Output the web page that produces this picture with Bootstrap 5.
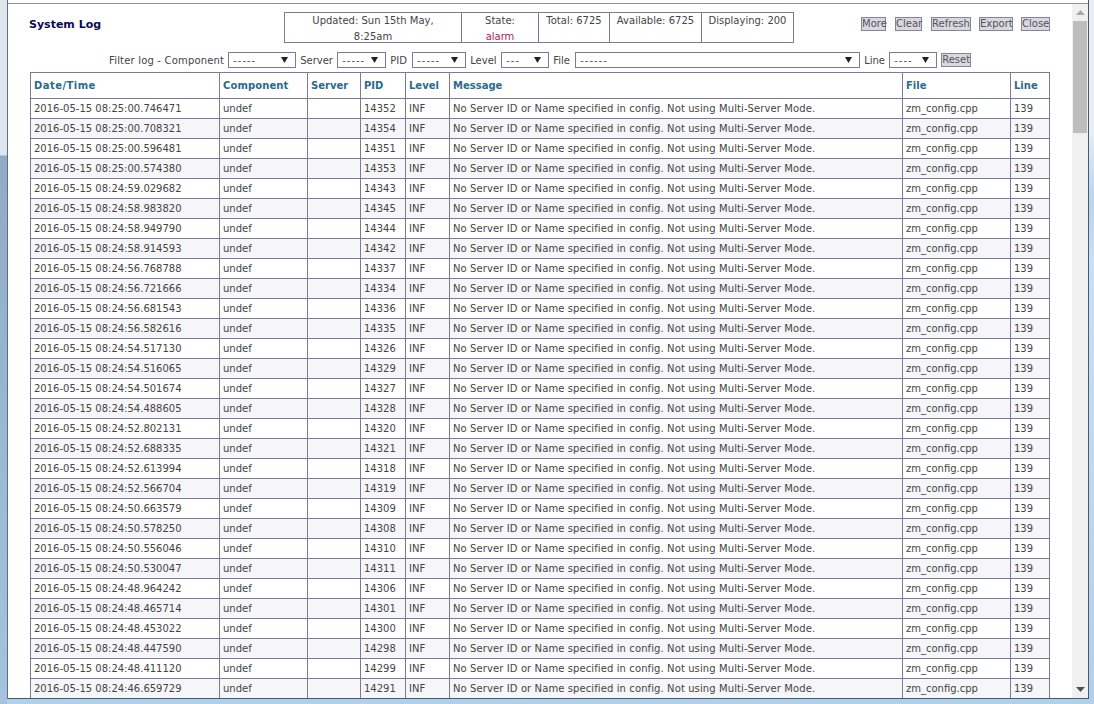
<!DOCTYPE html>
<html lang="en"><head><meta charset="utf-8"><title>System Log</title>
<link href="https://cdn.jsdelivr.net/npm/bootstrap@5.3.0/dist/css/bootstrap.min.css" rel="stylesheet">
<style>
html,body{height:100%;overflow:hidden;margin:0}
body{font-family:"DejaVu Sans",Verdana,sans-serif;font-size:10px;color:#444;background:#b9d1ea}
.winframe{height:704px;padding:0 5px 5px 7px;background:linear-gradient(to bottom,#dde6ee 0,#dde6ee 155px,#8fabc8 156px,#a5c3de 100%) left top/7px 100% no-repeat,linear-gradient(to bottom,#e8eef4 0,#e8eef4 130px,#b8d4f0 200px,#c8e0f8 260px,#b0d0ec 100%)}
.winbody{height:100%;border-left:1px solid #5f6f80;border-right:1px solid #4a5a6a;border-bottom:1px solid #4a5a6a;background:#fff}
.topstrip{height:4px;flex:none;background:#fff;border-bottom:1px solid #8f8fa0}
.mainrow{min-height:0}
.pane{min-width:0;overflow:hidden;padding:0 22px}
.head-row{height:46px;padding-top:8px}
.page-title{width:255px;font-size:11px;font-weight:700;color:#0b0b55;margin:0 0 0 -1px;padding:6px 0 0 0;flex:none}
.statbox{border:1px solid #7d7a99;height:31px;width:510px;flex:none}
.statbox>div{border-right:1px solid #7d7a99;text-align:center;line-height:16px}
.statbox>div:last-child{border-right:0}
.s1{width:177px}.s2{width:77px}.s3{width:71px}.s4{width:92px}.s5{flex:1}
.alarmtxt{color:#b02050}
.zbtn{font:10px/12px "DejaVu Sans",Verdana,sans-serif;color:#555;background:#d9d7df;border:1px solid #86839f;padding:0;height:14px;border-radius:0}
.btnset{margin-top:5px;margin-left:auto;gap:8px}
.b1{width:25px;margin-right:1px}.b2{width:27px;margin-right:1px}.b3{width:40px}.b4{width:34px}.b5{width:29px}.b6{width:30px}
.filter-row{height:20px;gap:4px;margin-left:79px;white-space:nowrap;margin-bottom:2px}
.lbl-first{letter-spacing:.18px}
.lbl-pid{width:18px}
.lbl-lvl{width:27px}
.lbl-file{width:18px}
.lbl-line{width:21px}
.lbl-srv{width:33px}
.filter-row select{appearance:none;-webkit-appearance:none;font:10px "DejaVu Sans",Verdana,sans-serif;letter-spacing:1px;color:#555;height:16px;border:1px solid #7d7a99;border-radius:0;padding:0 0 0 4px;background:#fff url("data:image/svg+xml,%3Csvg xmlns='http://www.w3.org/2000/svg' width='7' height='6'%3E%3Cpath d='M0 0h7L3.5 6z' fill='%23222'/%3E%3C/svg%3E") no-repeat right 7px center}
.w1{width:68px}.w2{width:49px}.w3{width:54px}.w4{width:48px}.w5{width:285px}.w6{width:48px}
table.logtbl{table-layout:fixed;width:1019px;margin:0;border-collapse:collapse;--bs-table-bg:transparent;font-size:10px;color:#444}
table.logtbl th,table.logtbl td{border:1px solid #7d7a99;padding:0 3px;height:20px;line-height:18px;white-space:nowrap;overflow:hidden;vertical-align:middle;color:#444}
table.logtbl th{height:26px;color:#2b6a8c;font-weight:700}
table.logtbl th.thwide{letter-spacing:.45px}
table.logtbl th.thcomp{letter-spacing:.1px}
table.logtbl td.msgcell{letter-spacing:.1px}
table.logtbl tbody tr:nth-child(even) td{background:#f6f6f8}
.c1{width:189px}.c2{width:88px}.c3{width:53px}.c4{width:45px}.c5{width:44px}.c6{width:453px}.c7{width:108px}.c8{width:39px}
.sbar{width:16px;flex:none;background:#f0f0f0}
.sbtn{height:17px;flex:none}
.sthumb{width:14px;height:112px;background:#bdbdbd;flex:none}
.sfill{flex:1}
</style></head>
<body>
<div class="winframe">
<div class="winbody d-flex flex-column">
<div class="topstrip"></div>
<div class="mainrow d-flex flex-grow-1">
<div class="pane flex-grow-1">
<div class="head-row d-flex align-items-start">
<h1 class="page-title">System Log</h1>
<div class="statbox d-flex">
<div class="s1">Updated: Sun 15th May,<br>8:25am</div>
<div class="s2">State:<br><span class="alarmtxt">alarm</span></div>
<div class="s3">Total: 6725</div>
<div class="s4">Available: 6725</div>
<div class="s5">Displaying: 200</div>
</div>
<div class="btnset d-flex">
<button class="zbtn b1">More</button><button class="zbtn b2">Clear</button><button class="zbtn b3">Refresh</button><button class="zbtn b4">Export</button><button class="zbtn b5">Close</button>
</div>
</div>
<div class="filter-row d-flex align-items-center">
<span class="lbl-first">Filter log - Component</span><select class="w1"><option>-----</option></select>
<span class="lbl-srv">Server</span><select class="w2"><option>-----</option></select>
<span class="lbl-pid">PID</span><select class="w3"><option>-----</option></select>
<span class="lbl-lvl">Level</span><select class="w4"><option>---</option></select>
<span class="lbl-file">File</span><select class="w5"><option>------</option></select>
<span class="lbl-line">Line</span><select class="w6"><option>----</option></select>
<button class="zbtn b6">Reset</button>
</div>
<table class="table logtbl">
<colgroup><col class="c1"><col class="c2"><col class="c3"><col class="c4"><col class="c5"><col class="c6"><col class="c7"><col class="c8"></colgroup>
<thead><tr><th class="thwide">Date/Time</th><th class="thcomp">Component</th><th>Server</th><th>PID</th><th>Level</th><th>Message</th><th>File</th><th>Line</th></tr></thead>
<tbody id="rows"></tbody>
</table>
</div>
<div class="sbar d-flex flex-column align-items-center">
<div class="sbtn d-flex align-items-center justify-content-center"><svg width="9" height="5"><path d="M0 5L4.500 0 9 5z" fill="#a8a8a8"/></svg></div>
<div class="sthumb"></div>
<div class="sfill"></div>
<div class="sbtn d-flex align-items-center justify-content-center"><svg width="9" height="5"><path d="M0 0L4.500 5 9 0z" fill="#505050"/></svg></div>
</div>
</div>
</div>
</div>
<script>
var d=[["08:25:00.746471",14352],["08:25:00.708321",14354],["08:25:00.596481",14351],["08:25:00.574380",14353],["08:24:59.029682",14343],["08:24:58.983820",14345],["08:24:58.949790",14344],["08:24:58.914593",14342],["08:24:56.768788",14337],["08:24:56.721666",14334],["08:24:56.681543",14336],["08:24:56.582616",14335],["08:24:54.517130",14326],["08:24:54.516065",14329],["08:24:54.501674",14327],["08:24:54.488605",14328],["08:24:52.802131",14320],["08:24:52.688335",14321],["08:24:52.613994",14318],["08:24:52.566704",14319],["08:24:50.663579",14309],["08:24:50.578250",14308],["08:24:50.556046",14310],["08:24:50.530047",14311],["08:24:48.964242",14306],["08:24:48.465714",14301],["08:24:48.453022",14300],["08:24:48.447590",14298],["08:24:48.411120",14299],["08:24:46.659729",14291]];
document.getElementById('rows').innerHTML=d.map(function(r){return '<tr><td>2016-05-15 '+r[0]+'</td><td>undef</td><td></td><td>'+r[1]+'</td><td>INF</td><td class="msgcell">No Server ID or Name specified in config. Not using Multi-Server Mode.</td><td>zm_config.cpp</td><td>139</td></tr>'}).join('');
</script>
<script src="https://cdn.jsdelivr.net/npm/bootstrap@5.3.0/dist/js/bootstrap.bundle.min.js"></script>
</body></html>
